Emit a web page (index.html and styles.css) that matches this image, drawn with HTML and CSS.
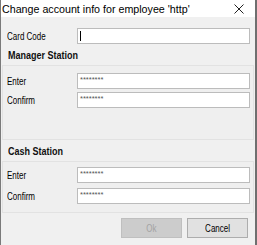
FILE: index.html
```html
<!DOCTYPE html>
<html lang="en">
<head>
    <meta charset="UTF-8">
    <title>Change account info</title>
    <link rel="stylesheet" href="styles.css">
</head>
<body>
    <div class="window">
        <div class="titlebar">
            <span class="title">Change account info for employee 'http'</span>
            <svg class="close" width="10" height="10" viewBox="0 0 10 10">
                <path d="M0.5 0.5 L9.5 9.5 M9.5 0.5 L0.5 9.5" stroke="#222" stroke-width="1" fill="none"/>
            </svg>
        </div>
        <div class="content">
            <div class="row card-row">
                <label><span>Card Code</span></label>
                <div class="field"><span class="caret"></span></div>
            </div>

            <div class="section-head"><span>Manager Station</span></div>
            <div class="panel manager">
                <div class="row">
                    <label><span>Enter</span></label>
                    <div class="field"><span class="dots">********</span></div>
                </div>
                <div class="row">
                    <label><span>Confirm</span></label>
                    <div class="field"><span class="dots">********</span></div>
                </div>
            </div>

            <div class="section-head"><span>Cash Station</span></div>
            <div class="panel cash">
                <div class="row">
                    <label><span>Enter</span></label>
                    <div class="field"><span class="dots">********</span></div>
                </div>
                <div class="row">
                    <label><span>Confirm</span></label>
                    <div class="field"><span class="dots">********</span></div>
                </div>
            </div>

            <div class="buttons">
                <button class="btn disabled"><span>Ok</span></button>
                <button class="btn"><span>Cancel</span></button>
            </div>
        </div>
    </div>
</body>
</html>
```

FILE: styles.css
```css
body {
    margin: 0;
    background-color: #f0f0f0;
    font-family: "Liberation Sans", Arial, sans-serif;
    overflow: hidden;
}

.window {
    width: 257px;
    height: 245px;
    box-sizing: border-box;
    border-left: 1px solid #7a7a7a;
    border-right: 2px solid #6f6f6f;
    background-color: #f0f0f0;
}

.titlebar {
    height: 17px;
    background-color: #ffffff;
    display: flex;
    align-items: center;
    justify-content: space-between;
    padding: 0 11px 0 1px;
}

.title {
    font-size: 10.7px;
    color: #000;
}

.close {
    display: block;
}

.content {
    padding: 11px 0 0 1px;
}

.row {
    display: flex;
    align-items: center;
    height: 16px;
    margin-bottom: 3px;
}

.row label {
    width: 70px;
    padding-left: 5px;
    font-size: 10px;
    color: #000;
}

.row label span,
.btn span {
    display: inline-block;
    transform: scaleX(0.8);
    transform-origin: left center;
}

.btn span {
    transform-origin: center;
}

.field {
    width: 173px;
    height: 16px;
    box-sizing: border-box;
    border: 1px solid #bcbcbc;
    background-color: #ffffff;
    display: flex;
    align-items: center;
    padding-left: 2px;
}

.caret {
    width: 1px;
    height: 10px;
    background-color: #000;
}

.dots {
    font-size: 7.5px;
    color: #555;
    line-height: 1;
    margin-top: -3px;
}

.card-row {
    margin-bottom: 0;
}

.section-head {
    height: 19px;
    margin-top: 2px;
    display: flex;
    align-items: center;
    padding-left: 6px;
    font-size: 10px;
    font-weight: bold;
    color: #111;
}

.section-head span {
    display: inline-block;
    transform: scaleX(0.9);
    transform-origin: left center;
}

.panel {
    width: 252px;
    box-sizing: border-box;
    border: 1px solid #e2e2e2;
    background-color: #efefef;
}

.panel .row label {
    padding-left: 4px;
}

.manager {
    height: 75px;
    padding-top: 7px;
}

.cash {
    height: 52px;
    padding-top: 5px;
}

.cash .row:first-child {
    margin-bottom: 5px;
}

.buttons {
    display: flex;
    justify-content: flex-end;
    gap: 5px;
    padding-right: 7px;
    margin-top: 5px;
}

.btn {
    width: 61px;
    height: 20px;
    box-sizing: border-box;
    border: 1px solid #adadad;
    background-color: #e1e1e1;
    font-family: "Liberation Sans", Arial, sans-serif;
    font-size: 10px;
    color: #000;
    padding: 0;
}

.btn.disabled {
    background-color: #cccccc;
    border-color: #bfbfbf;
    color: #a3a3a3;
}
```
